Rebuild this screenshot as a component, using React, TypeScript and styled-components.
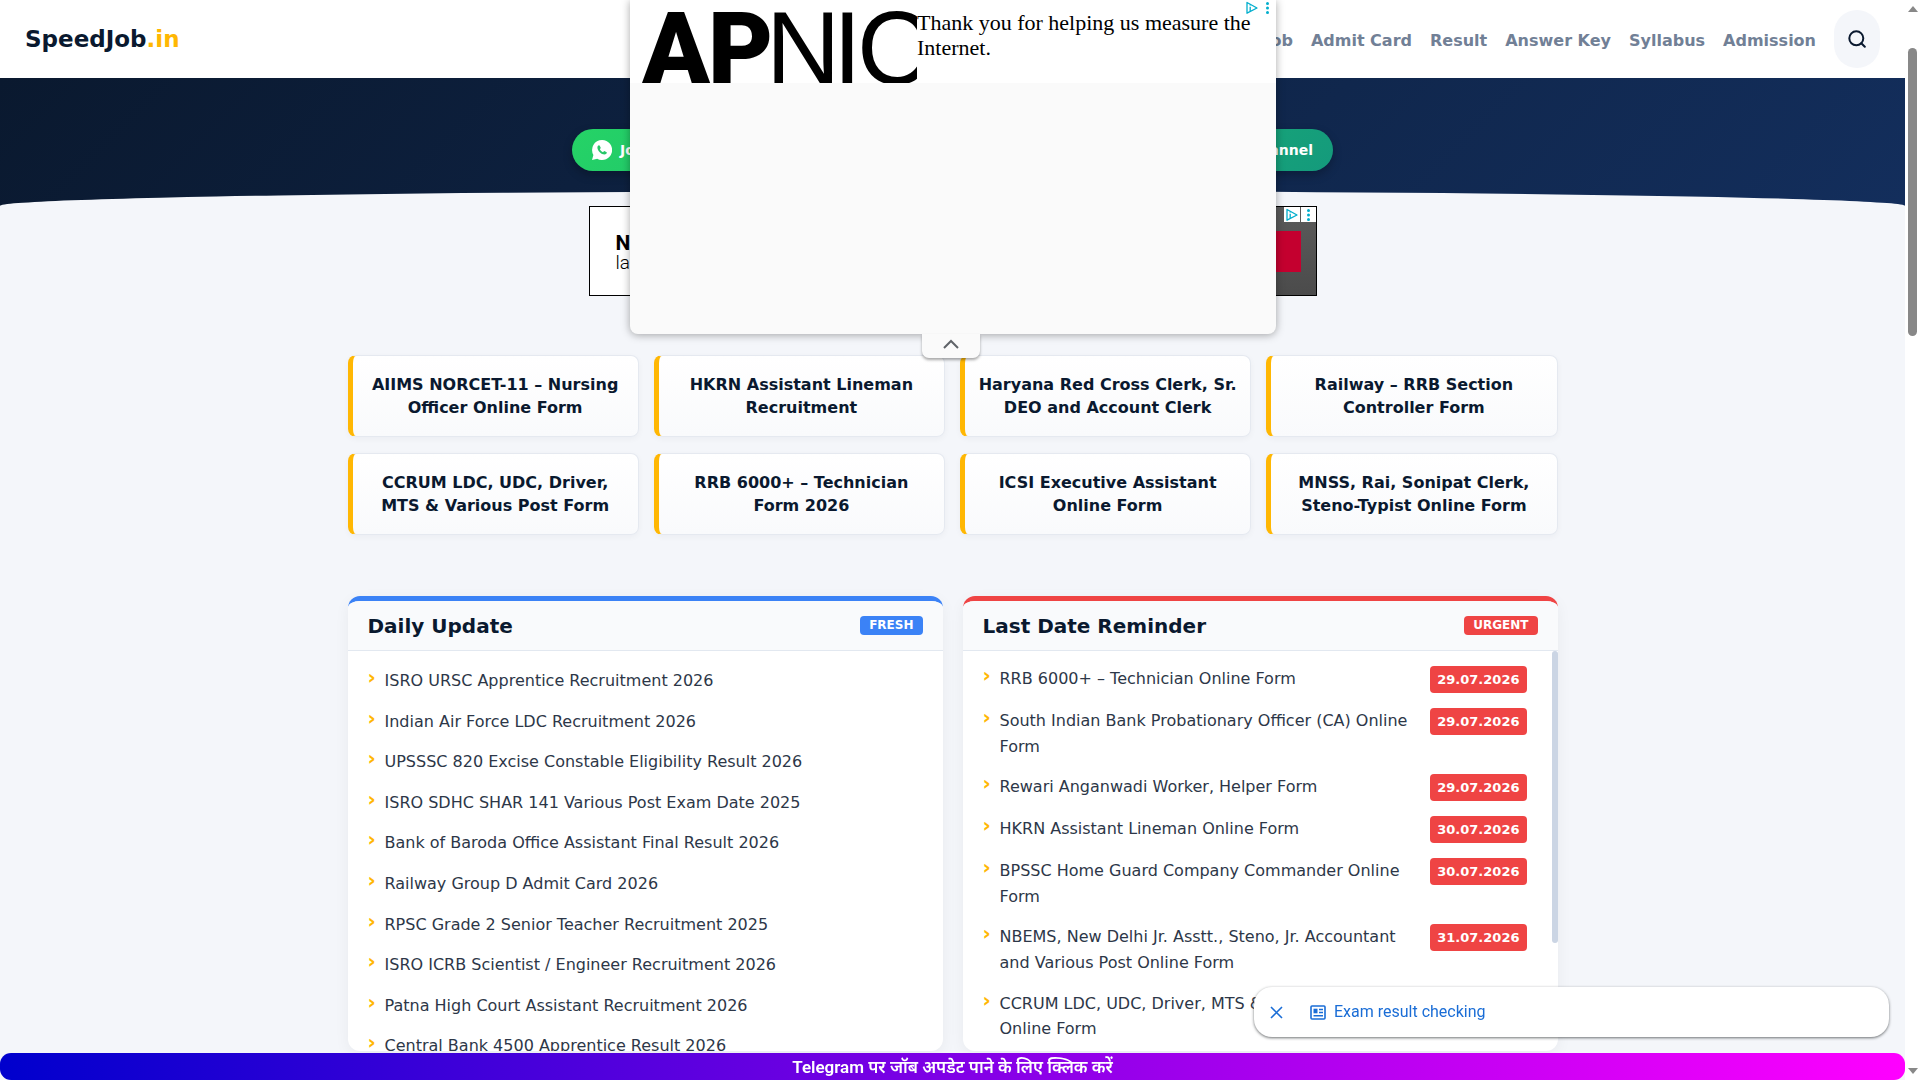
import React from "react";
import styled, { createGlobalStyle } from "styled-components";

const sans = `"DejaVu Sans", Verdana, sans-serif`;
const roboto = `Roboto, "Noto Sans", "Noto Sans Devanagari", sans-serif`;
const pageBg = "#f4f6fa";

const GlobalStyle = createGlobalStyle`
  *, *::before, *::after { box-sizing: border-box; }
  body {
    margin: 0;
    background: ${pageBg};
    color: #2d3748;
    font: 16px/1.6 ${sans};
    overflow: hidden;
  }
  a { color: inherit; text-decoration: none; }
  button { font: inherit; border: 0; padding: 0; cursor: pointer; }
  h2, p, ul { margin: 0; padding: 0; }
  ul { list-style: none; }
  svg { display: block; }
`;

const Shell = styled.div`
  display: grid;
  grid-template-columns: minmax(0, 1fr) 15px;
  height: 100vh;
  overflow: hidden;
`;

const Page = styled.div`
  overflow: hidden;
`;

const ScrollRail = styled.div`
  display: flex;
  flex-direction: column;
  align-items: center;
  justify-content: space-between;
  padding: 6px 0;
  background: #fff;
`;

const RailThumb = styled.div`
  width: 9px;
  height: 27%;
  margin: 36px 0 auto;
  border-radius: 5px;
  background: #888;
`;

const Header = styled.header`
  display: flex;
  align-items: center;
  justify-content: space-between;
  height: 78px;
  padding: 0 25px;
  background: #fff;
`;

const Logo = styled.a`
  color: #0a192f;
  font-size: 23px;
  font-weight: 700;
  line-height: 40px;

  span { color: #ffb703; }
`;

const Nav = styled.nav`
  display: flex;
  align-items: center;
  gap: 18px;
  color: #718096;
  font-weight: 700;

  a { padding-top: 3px; }
`;

const SearchButton = styled.button`
  display: grid;
  place-items: center;
  width: 46px;
  height: 58px;
  border-radius: 23px;
  background: ${pageBg};
  color: #0a192f;
`;

const Hero = styled.section`
  display: flex;
  flex-direction: column;
  height: 128px;
  background: linear-gradient(135deg, #0a192f, #132e5c);
`;

const HeroActions = styled.div`
  display: flex;
  flex: 1;
  align-items: flex-start;
  justify-content: center;
  padding-top: 51px;
`;

const ActionGroup = styled.a`
  display: flex;
  align-items: center;
  justify-content: space-between;
  width: 761px;
  height: 42px;
  padding: 0 20px;
  border-radius: 21px;
  background: linear-gradient(135deg, #25d366, #149a7c);
  box-shadow: 0 4px 10px rgba(0, 0, 0, 0.25);
  color: #fff;
  font-size: 14px;
  font-weight: 700;

  span { display: flex; align-items: center; gap: 8px; }
`;

const HeroCurve = styled.div`
  height: 15px;
  border-radius: 50% 50% 0 0 / 100% 100% 0 0;
  background: ${pageBg};
`;

const Container = styled.main`
  max-width: 1210px;
  margin: 0 auto;
`;

const Banner = styled.aside`
  display: flex;
  justify-content: space-between;
  width: 728px;
  height: 90px;
  margin: 0 auto 59px;
  border: 1px solid #000;
  background: #fff;
`;

const BannerCopy = styled.p`
  padding: 26px;
  color: #000;
  font: 300 19px/20px Roboto, sans-serif;

  strong { display: block; font-size: 21px; font-weight: 700; }
`;

const BannerSide = styled.div`
  display: flex;
  flex-direction: column;
  width: 200px;
  background: linear-gradient(to top, #4b4b4b, #5b5b5b);
`;

const BannerMarks = styled.div`
  display: flex;
  justify-content: flex-end;
  gap: 1px;

  span { background: #fff; }
`;

const BannerCta = styled.button`
  width: 120px;
  height: 41px;
  margin: 9px 15px 0 auto;
  background: #c4002f;
`;

const CardGrid = styled.section`
  display: grid;
  grid-template-columns: repeat(4, 1fr);
  gap: 16px 15px;
  margin-bottom: 61px;
`;

const JobCard = styled.a`
  display: flex;
  align-items: center;
  justify-content: center;
  padding: 17px 12px;
  border: 1px solid #e5e9f0;
  border-left: 5px solid #ffb703;
  border-radius: 8px;
  background: linear-gradient(to bottom, #fff, #f9fafc);
  box-shadow: 0 2px 6px rgba(10, 25, 47, 0.04);
  color: #0a192f;
  font-weight: 700;
  line-height: 23px;
  text-align: center;
`;

const PanelGrid = styled.section`
  display: grid;
  grid-template-columns: 1fr 1fr;
  gap: 20px;
`;

const Panel = styled.article<{ $accent: string }>`
  overflow: hidden;
  border-top: 5px solid ${(p) => p.$accent};
  border-radius: 12px;
  background: #fff;
  box-shadow: 0 4px 15px rgba(10, 25, 47, 0.05);
`;

const PanelHead = styled.header`
  display: flex;
  align-items: center;
  justify-content: space-between;
  height: 50px;
  padding: 0 20px;
  border-bottom: 1px solid #e2e8f0;
  background: #f9fafc;

  h2 { color: #0a192f; font-size: 20px; font-weight: 700; }
`;

const Badge = styled.span<{ $accent: string }>`
  padding: 0 9px;
  border-radius: 4px;
  background: ${(p) => p.$accent};
  color: #fff;
  font-size: 12px;
  font-weight: 700;
  line-height: 19px;
`;

const PanelBody = styled.div`
  display: grid;
  grid-template-columns: minmax(0, 1fr) auto;
  height: 400px;
  overflow: hidden;
`;

const List = styled.ul<{ $top: number }>`
  display: flex;
  flex-direction: column;
  gap: 15px;
  padding: ${(p) => p.$top}px 25px 0 20px;
`;

const Item = styled.li`
  display: grid;
  grid-template-columns: 17px minmax(0, 1fr) auto;
  flex: none;
  align-items: start;

  &::before {
    content: "›";
    color: #ffb703;
    font-size: 20px;
    font-weight: 700;
    line-height: 18px;
  }
`;

const DateTag = styled.time`
  margin-left: 20px;
  padding: 0 7px;
  border-radius: 4px;
  background: #ef4444;
  color: #fff;
  font-size: 13px;
  font-weight: 700;
  line-height: 27px;
`;

const PanelThumb = styled.div`
  width: 6px;
  height: 73%;
  border-radius: 3px;
  background: #cbd5e4;
`;

const AdPopup = styled.aside`
  position: fixed;
  top: 0;
  left: calc(50% - 330px);
  width: 646px;
  height: 334px;
  border-radius: 0 0 8px 8px;
  background: #fafafa;
  box-shadow: 0 1px 8px rgba(0, 0, 0, 0.35);
`;

const AdContent = styled.div`
  display: flex;
  height: 83px;
  padding: 0 0 0 12px;
  background: #fff;
`;

const AdText = styled.p`
  flex: 1;
  padding-top: 10px;
  color: #000;
  font: 22px/25px "Liberation Serif", "Times New Roman", serif;
`;

const AdMarks = styled.div`
  position: absolute;
  top: 0;
  right: 1px;
  display: flex;
`;

const CollapseTab = styled.button`
  position: absolute;
  top: 100%;
  left: 292px;
  display: grid;
  place-items: center;
  width: 58px;
  height: 24px;
  padding-bottom: 4px;
  border-radius: 0 0 7px 7px;
  background: #fafafa;
  box-shadow: 0 2px 3px rgba(0, 0, 0, 0.35);
`;

const Toast = styled.aside`
  position: fixed;
  right: 31px;
  bottom: 43px;
  display: flex;
  align-items: center;
  width: 635px;
  height: 50px;
  padding: 0 16px;
  border-radius: 18px;
  background: #fff;
  box-shadow: 0 1px 3px rgba(60, 64, 67, 0.75);
  color: #1a6dd6;
  font: 16px/24px ${roboto};

  button { background: none; color: inherit; }
  a { display: flex; align-items: center; gap: 8px; margin-left: 27px; }
`;

const TelegramBar = styled.a`
  position: fixed;
  right: 15px;
  bottom: 0;
  left: 0;
  height: 27px;
  border-radius: 11px;
  background: linear-gradient(90deg, #0000cd, #ff00ff);
  color: #fff;
  font: 600 17px/28px ${roboto};
  text-align: center;
`;

const AdChoices = () => (
  <svg width="16" height="15" viewBox="0 0 16 15" fill="none" stroke="#00aecd" strokeWidth="1.3">
    <path d="M3 2.5 13 8 3 13.2Z" strokeLinejoin="round" />
    <path d="M6.2 6.8v4.2M6.2 4.6v1" />
  </svg>
);

const Dots = () => (
  <svg width="15" height="15" viewBox="0 0 15 15" fill="#00aecd">
    <circle cx="7.5" cy="3.5" r="1.5" />
    <circle cx="7.5" cy="8" r="1.5" />
    <circle cx="7.5" cy="12.5" r="1.5" />
  </svg>
);

const WhatsApp = () => (
  <svg width="20" height="20" viewBox="0 0 20 20">
    <path d="M10 0a10 10 0 0 0-8.6 15L0 20l5.2-1.3A10 10 0 1 0 10 0Z" fill="#fff" />
    <path
      d="M6.9 5.3c-.4 0-1.5.8-1.5 2.2 0 3.4 4.1 7 7 7 1.5 0 2.5-1 2.5-1.9 0-.4-2.2-1.6-2.6-1.6-.4 0-.9 1.2-1.3 1.2-.8 0-3.1-2.1-3.1-2.9 0-.4.8-.8.8-1.3 0-.4-.9-2.7-1.8-2.7Z"
      fill="#27c768"
    />
  </svg>
);

const Apnic = () => (
  <svg width="275" height="83" viewBox="0 0 275 83" role="img" aria-label="APNIC">
    <g fontFamily="Roboto" fontWeight="900" fontSize="100">
      <text x="0" y="83">A</text>
      <text x="66" y="83">P</text>
    </g>
    <g fontFamily="Liberation Sans" fontSize="103">
      <text x="124" y="84">N</text>
      <text x="191" y="84">I</text>
      <text x="215" y="84">C</text>
    </g>
  </svg>
);

const cards = [
  "AIIMS NORCET-11 – Nursing Officer Online Form",
  "HKRN Assistant Lineman Recruitment",
  "Haryana Red Cross Clerk, Sr. DEO and Account Clerk",
  "Railway – RRB Section Controller Form",
  "CCRUM LDC, UDC, Driver, MTS & Various Post Form",
  "RRB 6000+ – Technician Form 2026",
  "ICSI Executive Assistant Online Form",
  "MNSS, Rai, Sonipat Clerk, Steno-Typist Online Form",
];

const updates = [
  "ISRO URSC Apprentice Recruitment 2026",
  "Indian Air Force LDC Recruitment 2026",
  "UPSSSC 820 Excise Constable Eligibility Result 2026",
  "ISRO SDHC SHAR 141 Various Post Exam Date 2025",
  "Bank of Baroda Office Assistant Final Result 2026",
  "Railway Group D Admit Card 2026",
  "RPSC Grade 2 Senior Teacher Recruitment 2025",
  "ISRO ICRB Scientist / Engineer Recruitment 2026",
  "Patna High Court Assistant Recruitment 2026",
  "Central Bank 4500 Apprentice Result 2026",
];

const reminders = [
  ["RRB 6000+ – Technician Online Form", "29.07.2026"],
  ["South Indian Bank Probationary Officer (CA) Online Form", "29.07.2026"],
  ["Rewari Anganwadi Worker, Helper Form", "29.07.2026"],
  ["HKRN Assistant Lineman Online Form", "30.07.2026"],
  ["BPSSC Home Guard Company Commander Online Form", "30.07.2026"],
  ["NBEMS, New Delhi Jr. Asstt., Steno, Jr. Accountant and Various Post Online Form", "31.07.2026"],
  ["CCRUM LDC, UDC, Driver, MTS & Various Post Online Form", "31.07.2026"],
];

const blue = "#3b82f6";
const red = "#ef4444";

export default function App() {
  return (
    <>
      <GlobalStyle />
      <Shell>
        <Page>
          <Header>
            <Logo href="#">SpeedJob<span>.in</span></Logo>
            <Nav>
              {["Job", "Admit Card", "Result", "Answer Key", "Syllabus", "Admission"].map((t) => (
                <a href="#" key={t}>{t}</a>
              ))}
              <SearchButton aria-label="Search">
                <svg width="18" height="18" viewBox="0 0 18 18" fill="none" stroke="currentColor" strokeWidth="2" strokeLinecap="round">
                  <circle cx="8.3" cy="8.3" r="7" />
                  <path d="m13.3 13.3 3.5 3.5" />
                </svg>
              </SearchButton>
            </Nav>
          </Header>
          <Hero>
            <HeroActions>
              <ActionGroup href="#">
                <span><WhatsApp />Join</span>
                <span>Channel</span>
              </ActionGroup>
            </HeroActions>
            <HeroCurve />
          </Hero>
          <Container>
            <Banner>
              <BannerCopy><strong>N</strong>la</BannerCopy>
              <BannerSide>
                <BannerMarks>
                  <span><AdChoices /></span>
                  <span><Dots /></span>
                </BannerMarks>
                <BannerCta aria-label="Open offer" />
              </BannerSide>
            </Banner>
            <CardGrid>
              {cards.map((t) => <JobCard href="#" key={t}>{t}</JobCard>)}
            </CardGrid>
            <PanelGrid>
              <Panel $accent={blue}>
                <PanelHead><h2>Daily Update</h2><Badge $accent={blue}>FRESH</Badge></PanelHead>
                <PanelBody>
                  <List $top={17}>
                    {updates.map((t) => <Item key={t}><a href="#">{t}</a></Item>)}
                  </List>
                </PanelBody>
              </Panel>
              <Panel $accent={red}>
                <PanelHead><h2>Last Date Reminder</h2><Badge $accent={red}>URGENT</Badge></PanelHead>
                <PanelBody>
                  <List $top={15}>
                    {reminders.map(([t, d]) => (
                      <Item key={t}><a href="#">{t}</a><DateTag>{d}</DateTag></Item>
                    ))}
                  </List>
                  <PanelThumb />
                </PanelBody>
              </Panel>
            </PanelGrid>
          </Container>
        </Page>
        <ScrollRail>
          <svg width="10" height="6" viewBox="0 0 10 6" fill="#888"><path d="M5 0 10 6H0Z" /></svg>
          <RailThumb />
          <svg width="10" height="6" viewBox="0 0 10 6" fill="#888"><path d="M0 0H10L5 6Z" /></svg>
        </ScrollRail>
      </Shell>
      <AdPopup>
        <AdContent>
          <Apnic />
          <AdText>Thank you for helping us measure the Internet.</AdText>
        </AdContent>
        <AdMarks><AdChoices /><Dots /></AdMarks>
        <CollapseTab aria-label="Collapse">
          <svg width="16" height="10" viewBox="0 0 16 10" fill="none" stroke="#5f6368" strokeWidth="2">
            <path d="m1 9 7-7 7 7" />
          </svg>
        </CollapseTab>
      </AdPopup>
      <Toast>
        <button aria-label="Close">
          <svg width="13" height="13" viewBox="0 0 13 13" fill="none" stroke="currentColor" strokeWidth="1.6">
            <path d="m1 1 11 11M12 1 1 12" />
          </svg>
        </button>
        <a href="#">
          <svg width="16" height="15" viewBox="0 0 16 15" fill="none" stroke="currentColor" strokeWidth="1.6">
            <rect x="1" y="1" width="14" height="13" rx="1" />
            <path d="M9 4.5h4M9 7.5h4M3.500 10.8h9.500" />
            <path d="M3.5 3.7h4v4.6h-4z" fill="currentColor" stroke="none" />
          </svg>
          Exam result checking
        </a>
      </Toast>
      <TelegramBar href="#">Telegram पर जॉब अपडेट पाने के लिए क्लिक करें</TelegramBar>
    </>
  );
}
